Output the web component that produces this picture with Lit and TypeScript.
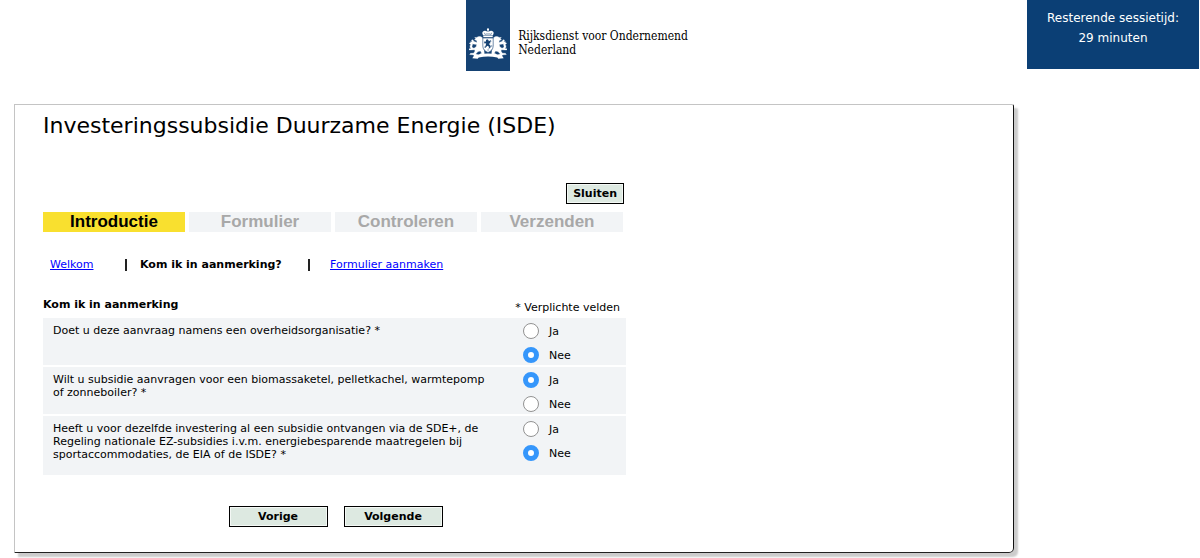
import { LitElement, html, css, svg } from "lit";
import { customElement, state } from "lit/decorators.js";

interface Question {
  id: string;
  text: string;
  answer: "Ja" | "Nee";
}

const lion = svg`
  <path d="M14.5 10.5c-1-1.6-3.2-1.9-4.4-.7l-1.6.2.9 1.1-1 .8 1.6.7.3 1.9-2.3-.9-.9-1.7-1 .5.6 1.3-1.3.4 2 1.8 2.6.6-.4 2-1.6 1.4c-1.3-.4-1.8-1.7-1.3-2.7.6-1.2.2-2.6-1.2-3.2.3.9-.2 1.3-.9 1 .2.8.6 1.1 1.1 1.3-.9 1.2-.9 2.9.2 3.9-.9.3-1.9.1-2.3-.5 0 1.3 1 1.9 2.2 1.7l2.5-.2.5 1.2-1.1 2.1-2.2.1-.7 1.1 3.8.3 2.4-3.1 1.8-.4.9 2.1-1.2.5-.4.9h3.4l.1-1.7-.3-3.2-.2-3.3.2-3.7 1.7-.4-.1-1.3-1.6.2z"/>`;

@customElement("rvo-emblem")
class RvoEmblem extends LitElement {
  static styles = css`
    :host { display: block; }
    svg { display: block; width: 38px; height: 32px; }
  `;
  render() {
    return html`
      <svg viewBox="0 0 38 32" fill="#fff" aria-hidden="true">
        <circle cx="19" cy="1.4" r="1.1" />
        <path d="M18.5 2h1v2h-1zM14 3.4c1.5-1 3.3-.6 4.5.6h1c1.2-1.2 3-1.6 4.5-.6 1 .8.9 2.1-.3 4.1h-9.4c-1.2-2-1.3-3.3-.3-4.1z" />
        <path d="M14.3 7.9h9.4v1.4h-9.4z" />
        <path d="M15.4 4.8l1.1 2.2M22.6 4.8l-1.1 2.2M18 5v2M20 5v2" stroke="#154273" stroke-width=".6" />
        <g stroke="#fff" stroke-width=".3">
          <g transform="matrix(1.35 0 0 1.08 -5.8 -1.2)">${lion}</g>
          <g transform="matrix(-1.35 0 0 1.08 43.8 -1.2)">${lion}</g>
        </g>
        <path d="M13.8 10h10.4v8c0 3.2-2.2 5.2-5.2 6.5-3-1.3-5.2-3.3-5.2-6.5z" stroke="#154273" stroke-width=".6" />
        <path d="M17 12.1l1.2-.8 1.3.7.2 1.3 2-1.1.8 1.1-1.4.4.3 1.6-1.6.5 1.9 2.2-.3 1.7-1.7 1-.1-.8.8-.8-2-1.4-1.7 1.9-1.2-.1.9-1.1.8-3.2-1.7.3-.5-1.2 1.9-.5z" fill="#154273" />
        <path d="M15.5 13.2h.9v.9h-.9zM22.3 17.6h.9v.9h-.9zM15.6 18.6h.9v.9h-.9zM18.6 21.6h.9v.9h-.9z" fill="#154273" />
        <path d="M3.6 25.4l5.6 1.1c6.4-1.2 13.2-1.2 19.6 0l5.6-1.1-1.3 2.4 1.6 2.5-5.4.4-1-1.3c-6.2-1.1-12.4-1.1-18.6 0l-1 1.3-5.4-.4 1.6-2.5z" />
      </svg>
    `;
  }
}

@customElement("app-root")
class AppRoot extends LitElement {
  @state() private questions: Question[] = [
    { id: "overheid", text: "Doet u deze aanvraag namens een overheidsorganisatie? *", answer: "Nee" },
    { id: "subsidie", text: "Wilt u subsidie aanvragen voor een biomassaketel, pelletkachel, warmtepomp of zonneboiler? *", answer: "Ja" },
    {
      id: "ontvangen",
      text: "Heeft u voor dezelfde investering al een subsidie ontvangen via de SDE+, de Regeling nationale EZ-subsidies i.v.m. energiebesparende maatregelen bij sportaccommodaties, de EIA of de ISDE? *",
      answer: "Nee",
    },
  ];

  static styles = css`
    :host {
      display: block;
      background: #fff;
      color: #000;
      font: 11px/13px Verdana, "DejaVu Sans", sans-serif;
    }
    header {
      display: grid;
      grid-template-columns: 15fr 219px 11fr 172px;
      align-items: start;
      padding-right: 1px;
      height: 104px;
    }
    .logo {
      grid-column: 2;
      display: flex;
      gap: 8px;
    }
    .mark {
      box-sizing: border-box;
      flex: none;
      width: 44px;
      height: 71px;
      padding: 28px 3px 0;
      background: #154273;
    }
    .ministry {
      padding-top: 29px;
      white-space: nowrap;
      font: 12px/14px "DejaVu Serif Condensed", "DejaVu Serif", serif;
    }
    .timer {
      grid-column: 4;
      box-sizing: border-box;
      height: 69px;
      padding-top: 8px;
      background: #0b3f75;
      color: #fff;
      text-align: center;
      font-size: 12px;
      line-height: 20px;
    }
    main {
      margin: 0 186px 5px 14px;
      padding: 7px 28px 25px;
      border: 1px solid #c4c4c4;
      border-right-color: #111;
      border-bottom-color: #222;
      border-radius: 0 2px 5px 0;
      box-shadow: 4px 4px 2px #ccc;
    }
    h1 {
      margin: 0;
      font-size: 22px;
      line-height: 28px;
      font-weight: 400;
    }
    .content { max-width: 583px; }
    .tools {
      display: flex;
      justify-content: flex-end;
      padding: 43px 2px 8px 0;
    }
    button {
      height: 21px;
      padding: 0 6px;
      border: 1px solid #000;
      background: #dde9e1;
      box-shadow: inset 0 0 0 1px #f4f8f5;
      color: #000;
      font: bold 11px/13px Verdana, "DejaVu Sans", sans-serif;
    }
    .phases {
      display: grid;
      grid-template-columns: repeat(4, 1fr);
      gap: 4px;
      margin: 0 3px 0 0;
      padding: 0;
      list-style: none;
      text-align: center;
      font: bold 17px/20px "Liberation Sans", Arial, sans-serif;
      color: #a8a8a8;
    }
    .phases li { background: #f2f4f6; }
    .phases .current { background: #f9e02f; color: #000; }
    .steps {
      display: grid;
      grid-template-columns: 75px 15px 168px 22px auto;
      justify-content: start;
      align-items: center;
      padding: 26px 0 0 7px;
    }
    .steps a { color: #0000ff; }
    .bar { width: 2px; height: 12px; background: #222; }
    .heading {
      display: flex;
      justify-content: space-between;
      align-items: flex-end;
      padding: 27px 6px 4px 0;
    }
    h2 {
      margin: 0 0 3px;
      font-size: 11px;
      line-height: 13px;
    }
    .questions { display: grid; gap: 2px; }
    .question {
      display: grid;
      grid-template-columns: 436px 1fr;
      column-gap: 34px;
      padding-left: 10px;
      background: #f2f4f6;
    }
    .text { margin: 0; padding: 6px 0 14px; }
    .answers {
      display: grid;
      align-content: start;
      gap: 8px;
      padding: 5px 0 2px;
    }
    label {
      display: flex;
      align-items: center;
      gap: 10px;
      height: 16px;
    }
    input {
      appearance: none;
      box-sizing: border-box;
      width: 16px;
      height: 16px;
      margin: 0;
      border: 1px solid #929292;
      border-radius: 50%;
      background: #fff;
    }
    input:checked { border: 5px solid #3596fb; }
    .buttons {
      display: flex;
      justify-content: center;
      gap: 16px;
      padding: 31px 0 0 2px;
    }
    .buttons button { width: 99px; }
  `;

  private choose(id: string, answer: "Ja" | "Nee") {
    this.questions = this.questions.map((q) => (q.id === id ? { ...q, answer } : q));
  }

  private renderQuestion(q: Question) {
    return html`
      <div class="question" role="radiogroup" aria-labelledby=${q.id}>
        <p class="text" id=${q.id}>${q.text}</p>
        <div class="answers">
          ${(["Ja", "Nee"] as const).map(
            (a) => html`
              <label>
                <input type="radio" name=${q.id} .checked=${q.answer === a} @change=${() => this.choose(q.id, a)} />
                ${a}
              </label>
            `
          )}
        </div>
      </div>
    `;
  }

  render() {
    return html`
      <header>
        <div class="logo">
          <div class="mark"><rvo-emblem></rvo-emblem></div>
          <div class="ministry">Rijksdienst voor Ondernemend<br />Nederland</div>
        </div>
        <div class="timer">Resterende sessietijd:<br />29 minuten</div>
      </header>
      <main>
        <h1>Investeringssubsidie Duurzame Energie (ISDE)</h1>
        <div class="content">
          <div class="tools"><button type="button">Sluiten</button></div>
          <ol class="phases">
            <li class="current">Introductie</li>
            <li>Formulier</li>
            <li>Controleren</li>
            <li>Verzenden</li>
          </ol>
          <nav class="steps">
            <a href="#welkom">Welkom</a>
            <span class="bar"></span>
            <strong>Kom ik in aanmerking?</strong>
            <span class="bar"></span>
            <a href="#aanmaken">Formulier aanmaken</a>
          </nav>
          <div class="heading">
            <h2>Kom ik in aanmerking</h2>
            <span>* Verplichte velden</span>
          </div>
          <div class="questions">${this.questions.map((q) => this.renderQuestion(q))}</div>
          <div class="buttons">
            <button type="button">Vorige</button>
            <button type="button">Volgende</button>
          </div>
        </div>
      </main>
    `;
  }
}
